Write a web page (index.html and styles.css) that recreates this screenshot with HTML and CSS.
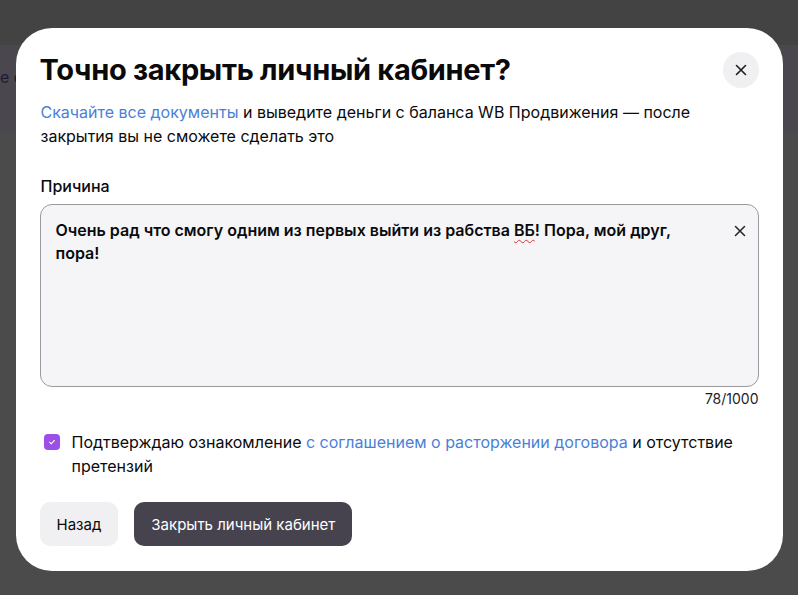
FILE: index.html
```html
<!DOCTYPE html>
<html lang="ru">
<head>
    <meta charset="utf-8">
    <title>Закрытие личного кабинета</title>
    <link rel="stylesheet" href="styles.css">
</head>
<body>
    <div class="page">
        <div class="topbar"></div>
        <div class="page-header"><span class="page-header-text">е о</span></div>
        <div class="page-body"></div>
    </div>

    <div class="overlay">
        <div class="modal">
            <div class="modal-head">
                <h1 class="modal-title">Точно закрыть личный кабинет?</h1>
                <button class="close-btn" aria-label="Закрыть">
                    <svg width="14" height="14" viewBox="0 0 14 14"><path d="M2.5 2.5l9 9M11.5 2.5l-9 9" stroke="#1d1d1f" stroke-width="1.6" stroke-linecap="round"/></svg>
                </button>
            </div>
            <p class="modal-text"><a href="#" class="link">Скачайте все документы</a> и выведите деньги с баланса WB Продвижения — после закрытия вы не сможете сделать это</p>

            <label class="field-label">Причина</label>
            <div class="field">
                <div class="field-value">Очень рад что смогу одним из первых выйти из рабства <span class="typo">ВБ</span>! Пора, мой друг, пора!</div>
                <button class="clear-btn" aria-label="Очистить">
                    <svg width="12" height="12" viewBox="0 0 12 12"><path d="M1.5 1.5l9 9M10.5 1.5l-9 9" stroke="#2a2a2e" stroke-width="1.6" stroke-linecap="round"/></svg>
                </button>
            </div>
            <div class="counter">78/1000</div>

            <div class="agree">
                <span class="checkbox">
                    <svg width="10" height="10" viewBox="0 0 10 10"><path d="M2.6 5.2l1.6 1.6 3.2-3.4" stroke="#fff" stroke-width="1.1" fill="none" stroke-linecap="round" stroke-linejoin="round"/></svg>
                </span>
                <span class="agree-text">Подтверждаю ознакомление <a href="#" class="link">с соглашением о расторжении договора</a> и отсутствие претензий</span>
            </div>

            <div class="actions">
                <button class="btn btn-light">Назад</button>
                <button class="btn btn-dark">Закрыть личный кабинет</button>
            </div>
        </div>
    </div>
</body>
</html>
```

FILE: styles.css
```css
* {
    box-sizing: border-box;
}

html, body {
    margin: 0;
    padding: 0;
    height: 100%;
}

body {
    font-family: Inter, "Noto Sans", "Liberation Sans", sans-serif;
    color: #0a0a0c;
    background: #4b4b4b;
    overflow: hidden;
}

/* page under the overlay */
.page {
    height: 100%;
    display: flex;
    flex-direction: column;
}
.topbar {
    height: 45px;
    background: #434344;
}
.page-header {
    height: 88px;
    background: #4a474e;
    padding-top: 20px;
}
.page-header-text {
    font-size: 16px;
    line-height: 24px;
    color: #1f1a33;
}
.page-body {
    flex: 1;
    background: #4b4b4b;
}

/* modal */
.overlay {
    position: fixed;
    inset: 0;
    display: flex;
    justify-content: center;
    align-items: flex-start;
    padding-top: 28px;
}

.modal {
    width: 767px;
    height: 543px;
    background: #fff;
    border-radius: 36px;
    padding: 24px 24px 0 24px;
}

.modal-head {
    display: flex;
    justify-content: space-between;
    align-items: flex-start;
}

.modal-title {
    margin: 0;
    font-size: 29px;
    line-height: 36px;
    font-weight: 700;
    letter-spacing: -0.3px;
}

.close-btn {
    width: 36px;
    height: 36px;
    border-radius: 50%;
    border: none;
    background: #f0f0f3;
    display: flex;
    align-items: center;
    justify-content: center;
    padding: 0;
}

.modal-text {
    margin: 12px 0 0 1px;
    font-size: 16px;
    line-height: 24px;
    color: #0a0a0c;
}

.link {
    color: #4a7fd8;
    text-decoration: none;
}

.field-label {
    display: block;
    margin-top: 28px;
    font-size: 16px;
    line-height: 20px;
    font-weight: 500;
    padding-left: 1px;
}

.field {
    margin-top: 8px;
    height: 183px;
    background: #f5f5f7;
    border: 1px solid #9a9a9e;
    border-radius: 12px;
    display: flex;
    justify-content: space-between;
    padding: 14px 12px 0 15px;
}

.field-value {
    font-size: 16px;
    line-height: 23px;
    font-weight: 600;
    max-width: 650px;
}

.typo {
    text-decoration: underline wavy #d23a3a;
    text-decoration-thickness: 1px;
    text-underline-offset: 3px;
}

.clear-btn {
    border: none;
    background: none;
    padding: 0;
    width: 12px;
    height: 12px;
    margin-top: 6px;
}

.counter {
    text-align: right;
    font-size: 14px;
    line-height: 20px;
    margin-top: 2px;
    color: #1d1d1f;
}

.agree {
    display: flex;
    align-items: flex-start;
    gap: 12px;
    margin-top: 21px;
    padding-left: 4px;
}

.checkbox {
    flex: none;
    width: 16px;
    height: 16px;
    border-radius: 4px;
    background: #9b4fe6;
    display: flex;
    align-items: center;
    justify-content: center;
    margin-top: 4px;
}

.agree-text {
    font-size: 16px;
    line-height: 24px;
}

.actions {
    display: flex;
    gap: 16px;
    margin-top: 24px;
}

.btn {
    height: 44px;
    border: none;
    border-radius: 10px;
    font-family: inherit;
    font-size: 15px;
    padding: 0 17px;
}

.btn-light {
    background: #f0f0f3;
    color: #0a0a0c;
}

.btn-dark {
    background: #46434f;
    color: #fff;
}
```
